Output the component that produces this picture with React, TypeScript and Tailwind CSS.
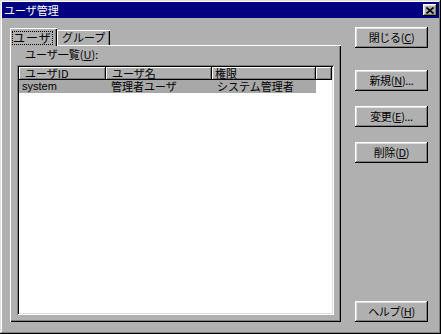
const outset =
  "shadow-[inset_-1px_-1px_0_#000,inset_1px_1px_0_#fff,inset_-2px_-2px_0_#808080,inset_2px_2px_0_#dfdfdf]";

const Btn = ({ children, className = "" }: { children: React.ReactNode; className?: string }) => (
  <div
    className={`w-[73px] h-[21px] flex items-center justify-center text-[11px] leading-[13px] tracking-[-0.3px] text-black bg-[#b0b0b0] ${outset} ${className}`}
  >
    {children}
  </div>
);

const HeadCell = ({ label, w, pl }: { label: string; w: string; pl: string }) => (
  <div
    className={`${w} ${pl} h-[13px] overflow-hidden flex items-center text-[11px] leading-[13px] bg-[#b0b0b0] shadow-[inset_-1px_-1px_0_#000,inset_1px_1px_0_#fff,inset_-2px_-2px_0_#808080]`}
  >
    {label}
  </div>
);

export default function App() {
  return (
    <div
      className={`w-[441px] h-[334px] bg-[#b0b0b0] p-[2px] flex flex-col font-['Noto_Sans_CJK_JP',sans-serif] text-black shadow-[inset_-1px_-1px_0_#000,inset_1px_1px_0_#dfdfdf,inset_-2px_-2px_0_#808080,inset_2px_2px_0_#fff]`}
    >
      {/* title bar */}
      <div className="h-[16px] bg-[#000080] flex items-center justify-between pl-[2px] pr-[2px]">
        <span className="text-white text-[11px] leading-[14px]">ユーザ管理</span>
        <div className={`w-[14px] h-[12px] bg-[#b0b0b0] flex items-center justify-center ${outset}`}>
          <svg width="8" height="7" viewBox="0 0 8 7">
            <path d="M0.5 0.5 L7.5 6.5 M7.5 0.5 L0.5 6.5" stroke="#000" strokeWidth="1.6" />
          </svg>
        </div>
      </div>

      <div className="flex-1 flex">
        {/* tabs + panel */}
        <div className="ml-[8px] mt-[10px] mb-[10px] w-[331px] flex flex-col">
          <div className="h-[17px] flex items-end">
            <div className="relative z-10 -mb-px w-[47px] h-[18px] bg-[#b0b0b0] shadow-[inset_1px_1px_0_#fff,inset_-1px_0_0_#000,inset_-2px_0_0_#808080] flex items-start pl-[2px] pt-[3px]">
              <span className="border border-dotted border-black w-[41px] h-[14px] flex items-center justify-center text-[12px] leading-[12px] tracking-[1px]">
                ユーザ
              </span>
            </div>
            <div className="w-[53px] h-[15px] overflow-hidden bg-[#b0b0b0] shadow-[inset_1px_1px_0_#fff,inset_-1px_0_0_#000,inset_-2px_0_0_#808080] flex items-center pl-[5px] text-[11px] leading-[13px]">
              グループ
            </div>
          </div>
          <div className="flex-1 flex flex-col px-[7px] pb-[7px] shadow-[inset_1px_1px_0_#fff,inset_-1px_-1px_0_#000,inset_-2px_-2px_0_#808080]">
            <div className="h-[20px] pl-[8px] pt-[3px] text-[11px] leading-[13px]">
              ユーザ一覧(<u>U</u>):
            </div>
            <div className="flex-1 bg-white p-[2px] flex flex-col shadow-[inset_1px_1px_0_#808080,inset_-1px_-1px_0_#fff,inset_2px_2px_0_#000,inset_-2px_-2px_0_#dfdfdf]">
              <div className="flex">
                <HeadCell label="ユーザID" w="w-[87px]" pl="pl-[6px]" />
                <HeadCell label="ユーザ名" w="w-[106px]" pl="pl-[6px]" />
                <HeadCell label="権限" w="w-[104px]" pl="pl-[3px]" />
                <HeadCell label="" w="w-[16px]" pl="pl-0" />
              </div>
              <div className="flex w-[297px] h-[13px] bg-[#a8a8a8] text-[11px] leading-[13px] items-center overflow-hidden">
                <div className="w-[87px] pl-[3px] font-['Liberation_Sans',sans-serif] text-[11px]">system</div>
                <div className="w-[106px] pl-[5px]">管理者ユーザ</div>
                <div className="w-[104px] pl-[5px]">システム管理者</div>
              </div>
            </div>
          </div>
        </div>

        {/* buttons */}
        <div className="ml-[14px] mt-[9px] mb-[10px] flex flex-col">
          <Btn>
            閉じる(<u>C</u>)
          </Btn>
          <Btn className="mt-[22px]">
            新規(<u>N</u>)...
          </Btn>
          <Btn className="mt-[15px]">
            変更(<u>E</u>)...
          </Btn>
          <Btn className="mt-[15px]">
            削除(<u>D</u>)
          </Btn>
          <Btn className="mt-auto">
            ヘルプ(<u>H</u>)
          </Btn>
        </div>
      </div>
    </div>
  );
}
